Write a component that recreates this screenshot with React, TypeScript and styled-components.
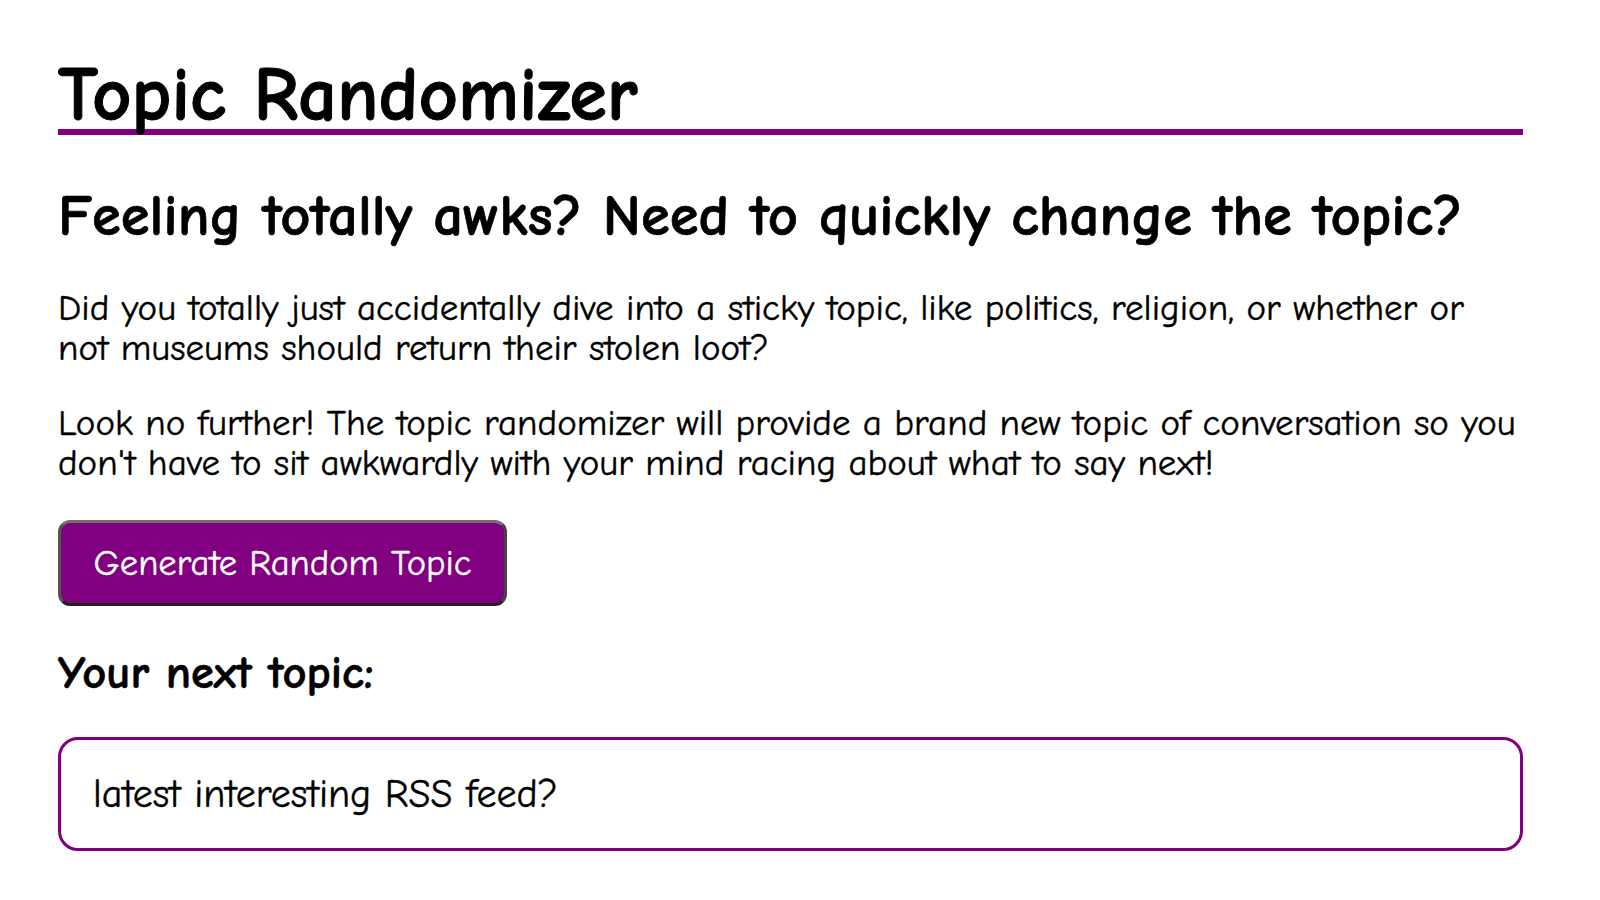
import { useState } from 'react';
import styled, { createGlobalStyle } from 'styled-components';

const GlobalStyle = createGlobalStyle`
    body {
        margin: 0;
        background: #fff;
        color: #000;
        font-family: 'Comic Sans MS', 'Comic Neue', Lato, sans-serif;
    }
`;

const topics = [
    'latest interesting RSS feed?',
    'favourite breakfast cereal?',
    'best board game ever made?',
    'a place you would love to visit?',
];

const Page = styled.main`
    width: 1465px;
    padding: 61px 0 40px 58px;
    display: flex;
    flex-direction: column;
    align-items: flex-start;
`;

const Title = styled.h1`
    align-self: stretch;
    margin: 0;
    font-size: 76.6px;
    line-height: 68px;
    font-weight: 700;
    -webkit-text-stroke: 1px #000;
    border-bottom: 6px solid #800080;
`;

const Subtitle = styled.h2`
    margin: 50px 0 6px;
    font-size: 58.6px;
    line-height: 62px;
    font-weight: 700;
    -webkit-text-stroke: 0.7px #000;
`;

const Text = styled.p`
    max-width: 1461px;
    margin: 35px 0 0;
    font-size: 37px;
    line-height: 40px;
    -webkit-text-stroke: 0.4px #000;
`;

const GenerateButton = styled.button`
    margin-top: 37px;
    height: 86px;
    width: 449px;
    padding: 0;
    border: 3px solid;
    border-color: #707070 #444 #222 #555;
    border-radius: 12px;
    background: #800080;
    color: #fff;
    font-family: inherit;
    font-size: 36.6px;
    -webkit-text-stroke: 0.4px #fff;
    cursor: pointer;
`;

const NextLabel = styled.h3`
    margin: 42px 0 0;
    font-size: 46.5px;
    line-height: 50px;
    font-weight: 700;
    -webkit-text-stroke: 0.6px #000;
`;

const TopicBox = styled.div`
    align-self: stretch;
    box-sizing: border-box;
    margin-top: 39px;
    height: 114px;
    padding: 0 32px;
    display: flex;
    align-items: center;
    border: 3px solid #800080;
    border-radius: 20px;
    font-size: 40px;
    -webkit-text-stroke: 0.4px #000;
`;

export default function App() {
    const [index, setIndex] = useState(0);

    return (
        <>
            <GlobalStyle />
            <Page>
                <Title>Topic Randomizer</Title>
                <Subtitle>Feeling totally awks? Need to quickly change the topic?</Subtitle>
                <Text>
                    Did you totally just accidentally dive into a sticky topic, like politics, religion, or whether or not museums should
                    return their stolen loot?
                </Text>
                <Text>
                    Look no further! The topic randomizer will provide a brand new topic of conversation so you don't have to sit
                    awkwardly with your mind racing about what to say next!
                </Text>
                <GenerateButton onClick={() => setIndex((index + 1) % topics.length)}>Generate Random Topic</GenerateButton>
                <NextLabel>Your next topic:</NextLabel>
                <TopicBox>{topics[index]}</TopicBox>
            </Page>
        </>
    );
}
